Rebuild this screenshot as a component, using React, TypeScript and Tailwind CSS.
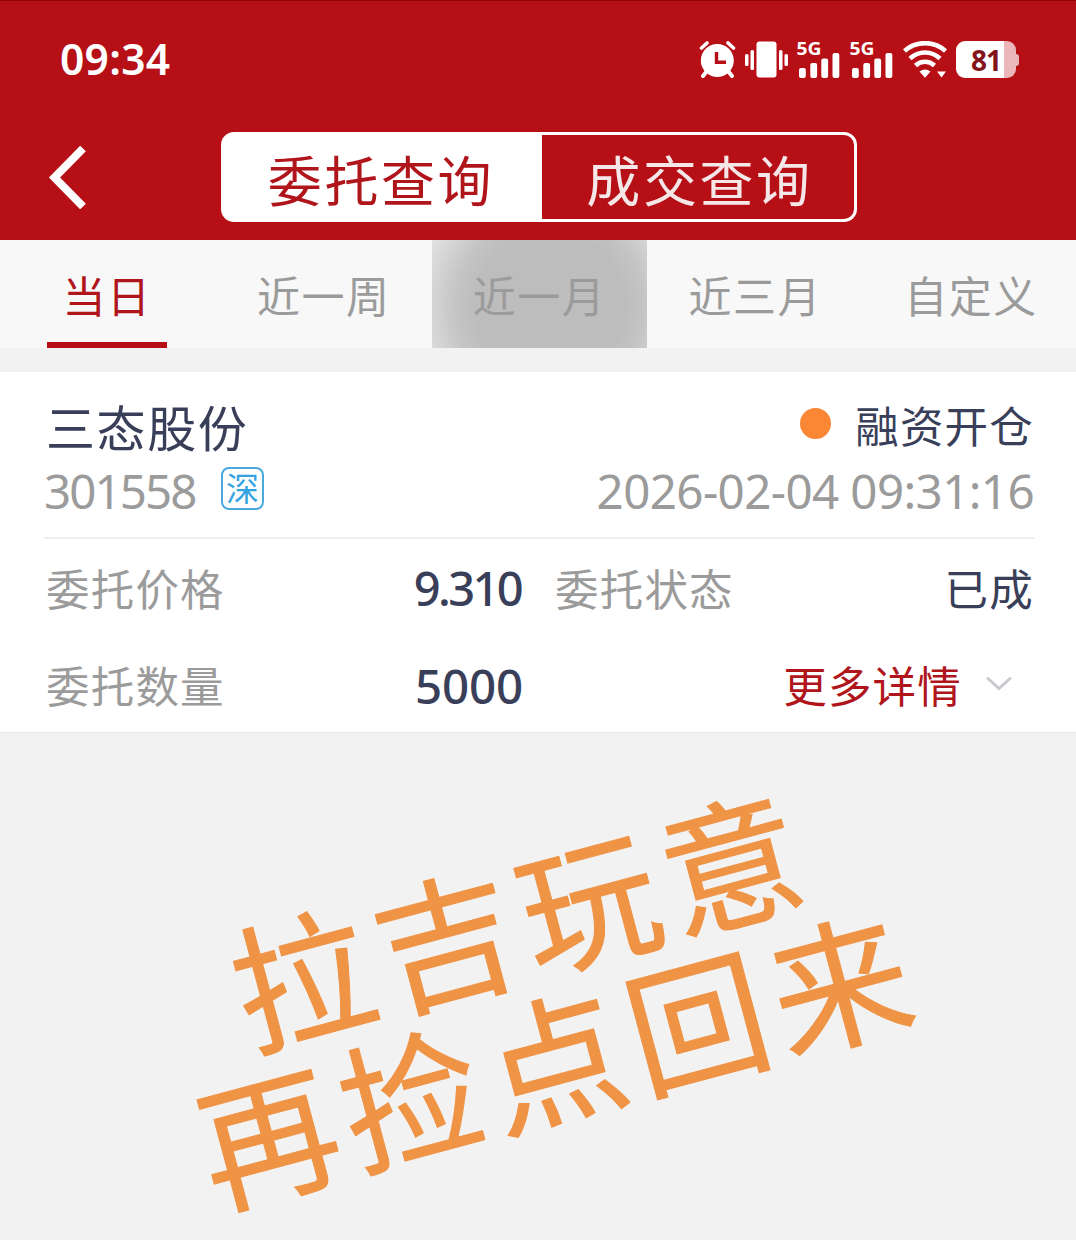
import React from 'react';

const TABS = ['当日', '近一周', '近一月', '近三月', '自定义'];

const CJK = "font-['Noto_Sans_CJK_SC',sans-serif]";
const NUM = "font-['Noto_Sans',sans-serif]";

const AlarmIcon: React.FC = () => (
  <svg width="37" height="37" viewBox="0 0 37 37" fill="none">
    <path d="M8 30l-4 5M29 30l4 5" stroke="#fff" strokeWidth="4" strokeLinecap="round" />
    <path d="M2.500 7l5.500-5M29 2l5.500 5" stroke="#fff" strokeWidth="3.600" strokeLinecap="round" />
    <circle cx="18.300" cy="19.500" r="16.500" fill="#fff" />
    <path d="M17.500 11v10.200h9.500" stroke="#b60f16" strokeWidth="3.400" />
  </svg>
);

const VibrateIcon: React.FC = () => (
  <svg width="43" height="37" viewBox="0 0 43 37" fill="#fff">
    <rect x="11.500" y="0.500" width="20" height="36" rx="3" />
    <rect x="0" y="13" width="3.500" height="12" rx="1.500" />
    <rect x="5.500" y="9" width="3.500" height="20" rx="1.500" />
    <rect x="34" y="9" width="3.500" height="20" rx="1.500" />
    <rect x="39.500" y="13" width="3.500" height="12" rx="1.500" />
  </svg>
);

const SignalIcon: React.FC = () => (
  <svg width="43" height="37" viewBox="0 0 43 37" fill="#fff" className="overflow-visible">
    <text
      x="-0.500"
      y="14"
      fontFamily="Noto Sans, sans-serif"
      fontSize="18.500"
      fontWeight="700"
      textLength="25"
      lengthAdjust="spacingAndGlyphs"
    >
      5G
    </text>
    <rect x="2" y="27" width="6.800" height="10" rx="2" />
    <rect x="13.300" y="22" width="6.800" height="15" rx="2" />
    <rect x="24.300" y="17.500" width="6.800" height="19.500" rx="2" />
    <rect x="35.500" y="12" width="6.800" height="25" rx="2" />
  </svg>
);

const WifiIcon: React.FC = () => (
  <svg width="44" height="37" viewBox="0 0 44 37" fill="none" stroke="#fff" strokeWidth="4.600">
    <path d="M1.500 10C13-0.500 31-0.500 42.500 10" />
    <path d="M7 17.500C16 9.500 28 9.500 37 17.500" />
    <path d="M12.500 24.500C18 19.500 26 19.500 31.500 24.500" />
    <path d="M16.500 30.500Q22 26.500 27.500 30.500L22 36.800Z" fill="#fff" stroke="none" />
    <path d="M34 30.500h9L38.500 36.500Z" fill="#fff" stroke="none" />
  </svg>
);

const Battery: React.FC = () => (
  <div className="flex items-center">
    <div className="flex h-[37px] w-[60px] items-center justify-center overflow-hidden rounded-[9px] bg-[linear-gradient(90deg,#fff_48px,#ebb7ba_48px)]">
      <span className={`${NUM} text-[28px] font-bold leading-none tracking-[-1px] text-[#84141b]`}>81</span>
    </div>
    <div className="h-3 w-[3px] rounded-r-sm bg-[#ebb7ba]" />
  </div>
);

const StatusBar: React.FC = () => (
  <div className="flex h-[117px] items-center justify-between pl-[60px] pr-[57px]">
    <span className={`${NUM} text-[42.500px] font-semibold leading-none tracking-[0.300px]`}>09:34</span>
    <div className="flex items-center">
      <AlarmIcon />
      <div className="ml-[9px]"><VibrateIcon /></div>
      <div className="ml-[9px]"><SignalIcon /></div>
      <div className="ml-[10px]"><SignalIcon /></div>
      <div className="ml-[10px]"><WifiIcon /></div>
      <div className="ml-[9px]"><Battery /></div>
    </div>
  </div>
);

const App: React.FC = () => {
  return (
    <div className={`${CJK} h-[1240px] w-[1076px] bg-[#f2f2f2] text-[#393f59]`}>
      {/* Header */}
      <header className="h-60 border-t border-[#8c0408] bg-[#b60f16] text-white">
        <StatusBar />
        <div className="flex h-[118px] items-center">
          <button className="ml-12 mr-[134px] h-[64px] w-[39px]">
            <svg width="39" height="64" viewBox="0 0 39 64" fill="none" stroke="#fff" strokeWidth="8">
              <path d="M35 3.500L6.500 32.500L35 61.500" />
            </svg>
          </button>
          <div className="flex h-[90px] w-[636px] rounded-[13px] border-3 border-white bg-[linear-gradient(90deg,#fff_318px,#b60f16_318px)] text-[54px] leading-none tracking-[2.600px]">
            <button className="w-[318px] pr-1 pt-1 text-[#b0151c]">委托查询</button>
            <button className="flex-1 pl-[3px] pt-1 text-[#f5e6e7]">成交查询</button>
          </div>
        </div>
      </header>

      {/* Period tabs */}
      <nav className="grid h-[108px] grid-cols-[repeat(5,215.800px)] overflow-hidden bg-[#f8f8f8]">
        {TABS.map((tab, i) => (
          <div
            key={tab}
            className={`flex h-[108px] justify-center text-[43px] leading-[108px] tracking-[1.500px] ${
              i === 0 ? 'text-[#b0151c]' : 'text-[#9b9b9b]'
            } ${i === 2 ? 'bg-[radial-gradient(circle_at_118px_66px,#bdbdbd_74px,#c4c4c4_94px,#d3d3d3_114px,#e3e3e3_138px)]' : ''}`}
          >
            {i === 0 ? (
              <span className="mr-0.5 h-[108px] w-[120px] border-b-6 border-[#b60f16] text-center">{tab}</span>
            ) : (
              tab
            )}
          </div>
        ))}
      </nav>

      {/* Order card */}
      <main className="mt-6 h-[361px] border-b border-[#e8e8e8] bg-white pl-11 pr-[42px]">
        <div className="border-b-2 border-[#eeeeee] pb-[11px] pt-[22px]">
          <div className="flex h-[62px] items-center justify-between">
            <span className="pl-0.5 text-[49px] leading-none tracking-[1.600px]">三态股份</span>
            <div className="flex items-center">
              <span className="mb-1 mr-6 size-[31px] rounded-full bg-[#fb8634]" />
              <span className="text-[43.500px] leading-none tracking-[1.200px]">融资开仓</span>
            </div>
          </div>
          <div className="flex h-[70px] items-center justify-between text-[#9b9b9b]">
            <div className="flex items-center">
              <span className={`${NUM} w-[153px] text-[47.500px] leading-none tracking-[-1.900px]`}>301558</span>
              <span className="mb-1.5 ml-6 flex size-[43px] items-center justify-center rounded-lg border-2 border-[#4aa9dc] pb-0.5 text-[33px] leading-none text-[#34a3e2]">
                深
              </span>
            </div>
            <span className={`${NUM} text-[47.500px] leading-none tracking-[-0.600px]`}>2026-02-04 09:31:16</span>
          </div>
        </div>

        <div className="grid grid-cols-2 gap-x-8 text-[43.500px] leading-none tracking-[1.200px]">
          <div className="flex h-[97px] items-center justify-between">
            <span className="pl-0.5 text-[#9b9b9b]">委托价格</span>
            <span className={`${NUM} pr-0.5 pt-0.5 text-[47px] font-medium tracking-[-2.600px]`}>9.310</span>
          </div>
          <div className="flex h-[97px] items-center justify-between">
            <span className="text-[#9b9b9b]">委托状态</span>
            <span>已成</span>
          </div>
          <div className="flex h-24 items-center justify-between">
            <span className="pl-0.5 pt-px text-[#9b9b9b]">委托数量</span>
            <span className={`${NUM} pt-1 text-[47.500px] font-medium tracking-[-0.200px]`}>5000</span>
          </div>
          <div className="flex h-24 items-center justify-end pr-[22px] text-[#b0151c]">
            <span className="pt-px">更多详情</span>
            <svg className="ml-6" width="26" height="16" viewBox="0 0 26 16" fill="none">
              <path d="M2 2.500L13 12.500L24 2.500" stroke="#c8c9ce" strokeWidth="3" strokeLinecap="round" />
            </svg>
          </div>
        </div>
      </main>

      {/* Slanted note across the empty area */}
      <section className="flex h-[507px] items-center justify-center pb-1.5">
        <p className="-rotate-15 whitespace-nowrap text-center text-[139px] leading-[144px] tracking-[9px] text-[#ef9345] [-webkit-text-stroke:1px_#ef9345]">
          拉吉玩意
          <br />
          再捡点回来
        </p>
      </section>
    </div>
  );
};

export default App;
